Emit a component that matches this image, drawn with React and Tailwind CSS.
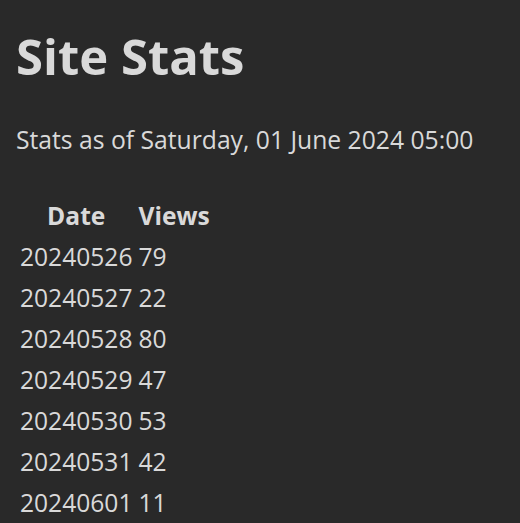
export default function App() {
  const rows = [
    ["20240526", "79"],
    ["20240527", "22"],
    ["20240528", "80"],
    ["20240529", "47"],
    ["20240530", "53"],
    ["20240531", "42"],
    ["20240601", "11"],
  ];
  return (
    <div className="min-h-[523px] bg-[#292929] px-4 pt-[26px] text-[#d9d9d9] [font-family:'Open_Sans',sans-serif]">
      <h1 className="text-[49px] font-bold leading-[60px]">Site Stats</h1>
      <p className="mt-[38px] text-[24.7px] leading-[32px]">Stats as of Saturday, 01 June 2024 05:00</p>
      <table className="mt-[38px] border-separate border-spacing-[2px] text-[24.6px]">
        <thead>
          <tr>
            <th className="px-[2px] text-center font-bold leading-[39px]">Date</th>
            <th className="px-[2px] text-center font-bold leading-[39px]">Views</th>
          </tr>
        </thead>
        <tbody>
          {rows.map(([d, v]) => (
            <tr key={d}>
              <td className="px-[2px] leading-[39px]">{d}</td>
              <td className="px-[2px] leading-[39px]">{v}</td>
            </tr>
          ))}
        </tbody>
      </table>
    </div>
  );
}
